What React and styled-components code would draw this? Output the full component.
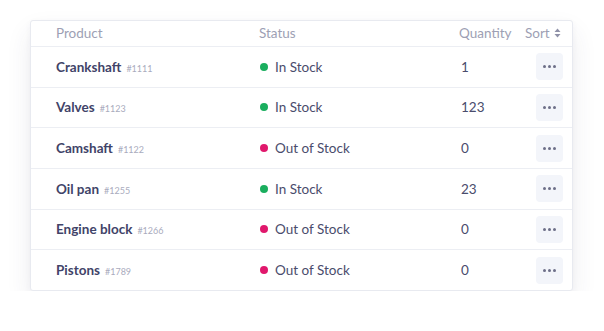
import React from "react";
import styled, { createGlobalStyle } from "styled-components";

const GlobalStyle = createGlobalStyle`
  body {
    margin: 0;
    background: #ffffff;
    font-family: Lato, "Noto Sans", sans-serif;
  }
`;

const Page = styled.div`
  padding: 20px 0 0 30px;
`;

const Card = styled.div`
  width: 543px;
  box-sizing: border-box;
  background: #ffffff;
  border: 1px solid #e8eaf0;
  border-radius: 3px;
  box-shadow: 0 12px 26px rgba(50, 55, 90, 0.09), 0 2px 6px rgba(50, 55, 90, 0.04);
`;

const Row = styled.div`
  display: grid;
  grid-template-columns: 203px 199px 66px 1fr;
  align-items: center;
  box-sizing: border-box;
  padding-left: 25px;
  height: ${(p) => (p.$head ? "25px" : "40.67px")};
  border-top: ${(p) => (p.$head ? "none" : "1px solid #eceef3")};
  ${(p) => p.$head && "padding-bottom: 1px;"}
`;

const HeadCell = styled.div`
  font-size: 13.5px;
  color: #9d9fb4;
  display: flex;
  align-items: center;
  gap: 4px;
  padding-left: ${(p) => p.$shift || 0}px;
`;

const Name = styled.div`
  font-size: 13.5px;
  font-weight: 700;
  color: #414368;
  display: flex;
  align-items: baseline;
  gap: 5px;
`;

const Hash = styled.span`
  font-size: 9px;
  font-weight: 400;
  color: #a9abbd;
`;

const Status = styled.div`
  display: flex;
  align-items: center;
  gap: 7px;
  font-size: 13.5px;
  color: #4a4c6c;
`;

const Dot = styled.span`
  width: 8px;
  height: 8px;
  border-radius: 50%;
  margin-left: 1px;
  background: ${(p) => (p.$ok ? "#1aae5e" : "#e0186c")};
`;

const Qty = styled.div`
  font-size: 13.5px;
  color: #4a4c6c;
  padding-left: 3px;
`;

const MenuButton = styled.button`
  width: 27px;
  height: 27px;
  margin-left: 12px;
  border: none;
  border-radius: 4px;
  background: #f3f5fa;
  display: flex;
  align-items: center;
  justify-content: center;
  gap: 2px;
  padding: 0;
`;

const MenuDot = styled.span`
  width: 3px;
  height: 3px;
  border-radius: 50%;
  background: #6d6f88;
`;

const items = [
  { name: "Crankshaft", id: "#1111", ok: true, qty: 1 },
  { name: "Valves", id: "#1123", ok: true, qty: 123 },
  { name: "Camshaft", id: "#1122", ok: false, qty: 0 },
  { name: "Oil pan", id: "#1255", ok: true, qty: 23 },
  { name: "Engine block", id: "#1266", ok: false, qty: 0 },
  { name: "Pistons", id: "#1789", ok: false, qty: 0 },
];

export default function App() {
  return (
    <Page>
      <GlobalStyle />
      <Card>
        <Row $head>
          <HeadCell>Product</HeadCell>
          <HeadCell>Status</HeadCell>
          <HeadCell $shift={1}>Quantity</HeadCell>
          <HeadCell $shift={1}>
            Sort
            <svg width="7" height="10" viewBox="0 0 7 10">
              <path d="M3.5 0.5 L6.5 4 H0.5 Z M3.5 9.5 L6.5 6 H0.5 Z" fill="#8f91a8" />
            </svg>
          </HeadCell>
        </Row>
        {items.map((it) => (
          <Row key={it.id}>
            <Name>
              {it.name}
              <Hash>{it.id}</Hash>
            </Name>
            <Status>
              <Dot $ok={it.ok} />
              {it.ok ? "In Stock" : "Out of Stock"}
            </Status>
            <Qty>{it.qty}</Qty>
            <MenuButton>
              <MenuDot />
              <MenuDot />
              <MenuDot />
            </MenuButton>
          </Row>
        ))}
      </Card>
    </Page>
  );
}
